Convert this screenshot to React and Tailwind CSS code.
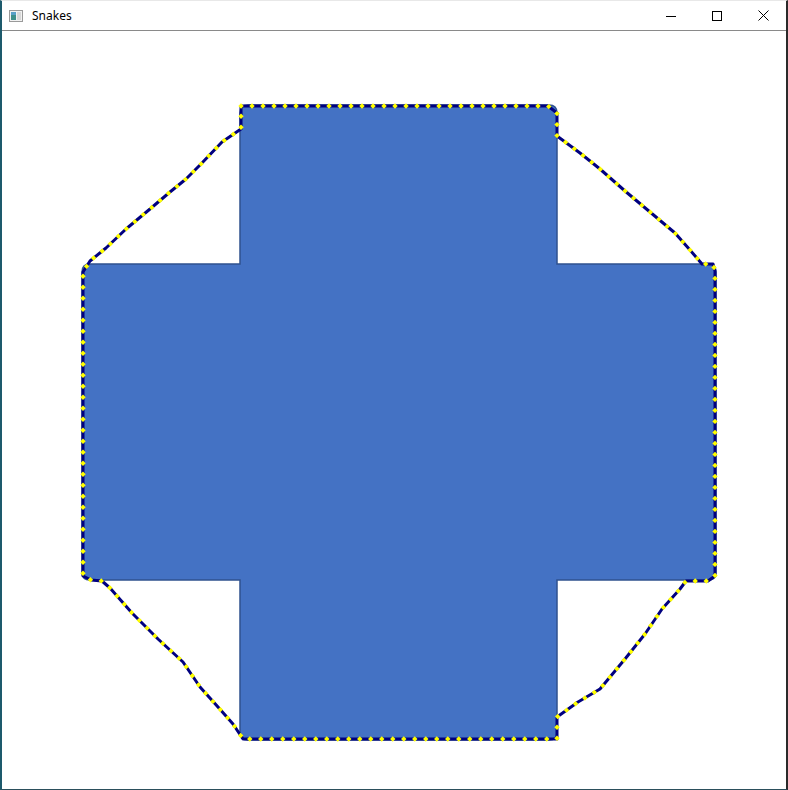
import React from "react";

const snake = [
  [241, 107], [548, 107], [557, 114], [557, 137], [580, 154], [600, 170], [625, 192],
  [650, 213], [675, 234], [690, 251], [702, 265], [713, 265], [715, 272], [715, 577],
  [708, 582], [686, 582], [680, 590], [662, 610], [645, 635], [625, 660], [600, 690],
  [578, 703], [557, 718], [557, 740], [243, 740], [233, 725], [218, 708], [200, 688],
  [183, 663], [158, 640], [132, 614], [110, 589], [102, 582], [91, 581], [83, 577],
  [83, 273], [90, 262], [106, 249], [126, 230], [150, 210], [170, 193], [186, 180],
  [201, 165], [222, 143], [241, 130], [241, 107],
];

function resample(pts, step) {
  const out = [];
  let carry = 0;
  for (let i = 0; i < pts.length - 1; i++) {
    const [x1, y1] = pts[i];
    const [x2, y2] = pts[i + 1];
    const len = Math.hypot(x2 - x1, y2 - y1);
    let d = carry;
    while (d <= len) {
      const t = len === 0 ? 0 : d / len;
      out.push([x1 + (x2 - x1) * t, y1 + (y2 - y1) * t]);
      d += step;
    }
    carry = d - len;
  }
  return out;
}

const dots = resample(snake, 11);

const crossPath = (() => {
  const r = 8;
  return [
    `M240,${106 + r}`,
    `Q240,106 ${240 + r},106`,
    `L${557 - r},106`,
    `Q557,106 557,${106 + r}`,
    `L557,265`,
    `L${716 - r},265`,
    `Q716,265 716,${265 + r}`,
    `L716,${581 - r}`,
    `Q716,581 ${716 - r},581`,
    `L557,581`,
    `L557,${741 - r}`,
    `Q557,741 ${557 - r},741`,
    `L${240 + r},741`,
    `Q240,741 240,${741 - r}`,
    `L240,581`,
    `L${82 + r},581`,
    `Q82,581 82,${581 - r}`,
    `L82,${265 + r}`,
    `Q82,265 ${82 + r},265`,
    `L240,265`,
    `Z`,
  ].join(" ");
})();

export default function App() {
  return (
    <div className="w-[788px] h-[790px] flex flex-col bg-white border-l-2 border-l-[#1d5a6c] border-r-2 border-r-[#2a2a2a] border-b border-b-[#2b4f5c] border-t border-t-[#e8e8e8] overflow-hidden" style={{ fontFamily: '"Noto Sans", "Open Sans", sans-serif' }}>
      <div className="h-[30px] flex items-center border-b border-b-[#8a8a8a] shrink-0">
        <div className="pl-[7px] pr-[9px] flex items-center">
          <svg width="14" height="12" viewBox="0 0 14 12">
            <rect x="0.5" y="0.5" width="13" height="11" fill="#f2f2f2" stroke="#9a9a9a" />
            <rect x="2" y="2" width="5" height="8" fill="#3f8f8a" />
            <rect x="2" y="2" width="5" height="3" fill="#5aa0c8" />
            <rect x="8" y="2" width="4" height="8" fill="#d8d8d8" />
          </svg>
        </div>
        <span className="text-[12px] text-black leading-none">Snakes</span>
        <div className="ml-auto flex h-full">
          <div className="w-[46px] h-full flex items-center justify-center">
            <svg width="10" height="10" viewBox="0 0 10 10"><line x1="0" y1="5.5" x2="10" y2="5.5" stroke="#000" strokeWidth="1" /></svg>
          </div>
          <div className="w-[46px] h-full flex items-center justify-center">
            <svg width="10" height="10" viewBox="0 0 10 10"><rect x="0.5" y="0.5" width="9" height="9" fill="none" stroke="#000" strokeWidth="1" /></svg>
          </div>
          <div className="w-[46px] h-full flex items-center justify-center">
            <svg width="11" height="11" viewBox="0 0 11 11"><path d="M0.5 0.5 L10.5 10.5 M10.5 0.5 L0.5 10.5" stroke="#000" strokeWidth="1" fill="none" /></svg>
          </div>
        </div>
      </div>
      <div className="flex-1 relative">
        <svg width="786" height="757" viewBox="2 32 786 757" className="block">
          <path d={crossPath} fill="#4472C4" stroke="#2F528F" strokeWidth="1.5" />
          <polyline points={snake.map((p) => p.join(",")).join(" ")} fill="none" stroke="#00007f" strokeWidth="3" strokeLinejoin="round" />
          {dots.map(([x, y], i) => (
            <rect key={i} x={x - 1.9} y={y - 1.9} width="3.8" height="3.8" fill="#ffff00" transform={`rotate(45 ${x} ${y})`} />
          ))}
        </svg>
      </div>
    </div>
  );
}
